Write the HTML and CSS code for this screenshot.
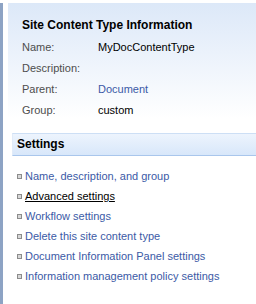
FILE: index.html
```html
<!DOCTYPE html>
<html lang="en">
<head>
    <meta charset="UTF-8">
    <title>Site Content Type</title>
    <link rel="stylesheet" href="styles.css">
</head>
<body>
    <div class="page">
        <div class="info-panel">
            <h2 class="info-title">Site Content Type Information</h2>
            <table class="info-table">
                <tr><td class="label">Name:</td><td>MyDocContentType</td></tr>
                <tr><td class="label">Description:</td><td></td></tr>
                <tr><td class="label">Parent:</td><td><a href="#" class="link">Document</a></td></tr>
                <tr><td class="label">Group:</td><td>custom</td></tr>
            </table>
        </div>

        <div class="settings-header">Settings</div>

        <ul class="settings-list">
            <li><a href="#" class="link">Name, description, and group</a></li>
            <li><a href="#" class="link active">Advanced settings</a></li>
            <li><a href="#" class="link">Workflow settings</a></li>
            <li><a href="#" class="link">Delete this site content type</a></li>
            <li><a href="#" class="link">Document Information Panel settings</a></li>
            <li><a href="#" class="link">Information management policy settings</a></li>
        </ul>
    </div>
</body>
</html>
```
FILE: styles.css
```css
body {
    margin: 0;
    font-family: 'Liberation Sans', Arial, sans-serif;
    font-size: 11px;
    color: #000;
    background: #fff;
}

.page {
    border-left: 3px solid #8da3c4;
    min-height: 304px;
    box-sizing: border-box;
    padding-left: 5px;
}

.info-panel {
    margin-top: 3px;
    background: linear-gradient(#dce8f8, #ffffff 95%);
    padding: 15px 0 12px 14px;
    height: 95px;
}

.info-title {
    margin: 0 0 4px;
    font-size: 12px;
    font-weight: bold;
}

.info-table {
    border-collapse: collapse;
}

.info-table td {
    padding: 0;
    height: 21px;
    font-size: 11px;
}

.info-table .label {
    width: 76px;
    color: #4d4d4d;
}

.link {
    color: #3b5aa6;
    text-decoration: none;
}

.link.active {
    color: #000;
    text-decoration: underline;
}

.settings-header {
    margin: 8px 0 0 4px;
    height: 21px;
    line-height: 21px;
    padding-left: 4px;
    font-weight: bold;
    font-size: 12px;
    background: linear-gradient(#edf4fd, #d8e7fa);
    border-top: 1px solid #cddff5;
    border-bottom: 1px solid #a9c6ec;
    border-left: 1px solid #e1ebf8;
}

.settings-list {
    list-style: none;
    margin: 10px 0 0;
    padding: 0 0 0 9px;
}

.settings-list li {
    display: flex;
    align-items: center;
    height: 20px;
}

.settings-list li::before {
    content: '';
    width: 3px;
    height: 3px;
    border: 1px solid #8c8c8c;
    background: #d8d8d8;
    margin-right: 3px;
}
```
